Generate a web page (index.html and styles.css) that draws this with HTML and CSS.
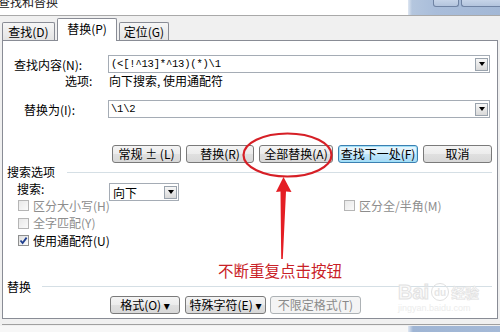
FILE: index.html
```html
<!DOCTYPE html>
<html lang="zh-CN">
<head>
<meta charset="utf-8">
<title>查找和替换</title>
<link rel="stylesheet" href="styles.css">
</head>
<body>
<div class="window">
  <div class="titlebar">
    <div class="title-left"><span class="title-text">查找和替换</span></div>
    <div class="title-right">
      <span class="wbtn wbtn-a"></span>
      <span class="wbtn wbtn-b"></span>
    </div>
  </div>
  <div class="dialog">
    <div class="tabs">
      <div class="tab">查找(D)</div>
      <div class="tab active">替换(P)</div>
      <div class="tab">定位(G)</div>
    </div>
    <div class="panel">
      <div class="row row-find">
        <label class="lbl lbl-find">查找内容(N):</label>
        <div class="combo"><span class="combo-text mono">(&lt;[!^13]*^13)(*)\1</span><span class="drop"><i class="tri"></i></span></div>
      </div>
      <div class="row row-opts">
        <span class="lbl lbl-opts">选项:</span>
        <span class="opts-val">向下搜索, 使用通配符</span>
      </div>
      <div class="row row-repl">
        <label class="lbl lbl-repl">替换为(I):</label>
        <div class="combo"><span class="combo-text mono">\1\2</span><span class="drop"><i class="tri"></i></span></div>
      </div>
      <div class="row btn-row">
        <button class="btn w-normal">常规 ± (L)</button>
        <button class="btn w-repl">替换(R)</button>
        <button class="btn w-all">全部替换(A)</button>
        <button class="btn btn-default w-next">查找下一处(F)</button>
        <button class="btn w-cancel">取消</button>
      </div>
      <div class="group-head group-search"><span>搜索选项</span><i class="rule"></i></div>
      <div class="row row-dir">
        <span class="lbl lbl-dir">搜索:</span>
        <div class="select"><span class="select-text">向下</span><span class="drop"><i class="tri"></i></span></div>
      </div>
      <div class="opt-row">
        <span class="check disabled"><i class="box"></i>区分大小写(H)</span>
        <span class="check disabled"><i class="box"></i>区分全/半角(M)</span>
      </div>
      <div class="opt-row">
        <span class="check disabled"><i class="box"></i>全字匹配(Y)</span>
      </div>
      <div class="opt-row">
        <span class="check"><i class="box checked"><svg viewBox="0 0 9 9" width="9" height="9"><path d="M1.5 4.5 L3.6 7 L7.6 1.6" fill="none" stroke="#1f3f8f" stroke-width="1.8"/></svg></i>使用通配符(U)</span>
      </div>
      <div class="group-head group-repl"><span>替换</span><i class="rule"></i></div>
      <div class="row btn-row2">
        <button class="btn w-fmt">格式(O) ▾</button>
        <button class="btn w-spec">特殊字符(E) ▾</button>
        <button class="btn btn-disabled w-nofmt">不限定格式(T)</button>
      </div>
    </div>
    <div class="dialog-foot"></div>
  </div>
  <div class="bottom-strip"><div class="bs-left"></div><div class="bs-right"></div></div>

  <svg class="annot" viewBox="0 0 500 332" width="500" height="332">
    <ellipse cx="287.5" cy="155" rx="44" ry="21.5" fill="none" stroke="#d61f26" stroke-width="2.2"/>
    <polygon points="283.5,177 291.5,192 286,191.5 282.8,259 281.2,259 280.5,191.5 276,192" fill="#e41e24"/>
  </svg>
  <div class="annot-text">不断重复点击按钮</div>

  <div class="watermark">
    <div class="wm-main"><span class="wm-bai">Bai</span><span class="wm-du">du</span><span class="wm-jy">经验</span></div>
    <div class="wm-url">jingyan.baidu.com</div>
  </div>
</div>
</body>
</html>
```

FILE: styles.css
```css
* { box-sizing: border-box; }
html, body { margin: 0; padding: 0; }
body {
  width: 500px;
  height: 332px;
  overflow: hidden;
  background: #fff;
  font-family: "Noto Sans CJK SC", "DejaVu Sans", sans-serif;
  font-size: 12px;
  color: #000;
}
.window { position: relative; width: 500px; height: 332px; overflow: hidden; }

/* title bar */
.titlebar { display: flex; height: 15px; }
.title-left { flex: 1; background: #fff; position: relative; overflow: hidden; }
.title-text {
  display: block;
  margin-top: -6px;
  margin-left: -2px;
  font-size: 12px;
  line-height: 16px;
  color: #222;
}
.title-right {
  width: 92px;
  background: linear-gradient(90deg, #dfe7f2 0, #b4c6de 4px, #a9bdda 30%, #a3b8d6 100%);
  display: flex;
  align-items: flex-start;
  padding-left: 25px;
  gap: 2px;
}
.wbtn {
  height: 7px;
  border: 1px solid #6f83a3;
  border-top: none;
  border-radius: 0 0 3px 3px;
  background: linear-gradient(#c6d4e8, #b3c4dd);
}
.wbtn-a { width: 26px; }
.wbtn-b { width: 40px; border-radius: 0 0 0 3px; border-right: none; }

/* dialog */
.dialog {
  background: #f0f0f0;
  border-top: 1px solid #a9a9a9;
  height: 311px;
  padding: 0 0 0 2px;
}
.tabs {
  display: flex;
  align-items: flex-end;
  height: 24px;
  gap: 2px;
}
.tab {
  height: 18px;
  border: 1px solid #898c95;
  border-bottom: none;
  border-radius: 2px 2px 0 0;
  background: linear-gradient(#f6f6f6, #e4e4e4);
  padding: 0;
  text-align: center;
  white-space: nowrap;
  line-height: 17px;
  font-size: 12px;
  position: relative;
}
.tab:first-child { width: 53px; }
.tab.active {
  width: 60px;
  height: 23px;
  background: #fff;
  margin-bottom: -1px;
  z-index: 2;
  line-height: 20px;
}
.tab:last-child { width: 50px; }

.panel {
  width: 496px;
  height: 279px;
  background: #fff;
  border: 1px solid #898c95;
  padding: 0 0 0 2px;
  position: relative;
  z-index: 1;
}

.row { display: flex; align-items: center; }
.lbl { white-space: nowrap; }

.row-find { margin-top: 14px; height: 18px; }
.lbl-find { width: 103px; padding-left: 9px; }
.row-opts { height: 16px; }
.lbl-opts { width: 104px; padding-left: 60px; line-height: 16px; }
.opts-val { line-height: 16px; }
.row-repl { margin-top: 11px; height: 18px; }
.lbl-repl { width: 103px; padding-left: 19px; }

.combo {
  width: 382px;
  height: 18px;
  border: 1px solid #a5acb5;
  display: flex;
  align-items: center;
  justify-content: space-between;
  padding: 0 1px 0 2px;
  background: #fff;
}
.combo-text { line-height: 16px; }
.mono { font-family: "Liberation Mono", "DejaVu Sans Mono", monospace; font-size: 10.5px; letter-spacing: -0.2px; }
.drop {
  width: 13px;
  height: 13px;
  border: 1px solid #9aa3ad;
  background: linear-gradient(#f7f7f7, #d9d9d9);
  display: flex;
  align-items: center;
  justify-content: center;
}
.tri {
  width: 0; height: 0;
  border-left: 3.5px solid transparent;
  border-right: 3.5px solid transparent;
  border-top: 4px solid #000;
}

/* buttons */
.btn {
  font-family: inherit;
  font-size: 12px;
  height: 18px;
  padding: 0;
  border: 1px solid #7a7a7a;
  border-radius: 3px;
  background: linear-gradient(#f4f4f4 0%, #ececec 50%, #e0e0e0 51%, #d8d8d8 100%);
  color: #000;
  line-height: 16px;
  white-space: nowrap;
}
.btn-default {
  border-color: #3c7fb1;
  background: linear-gradient(#eaf6fd 0%, #d9f0fc 50%, #bee6fd 51%, #a7d9f5 100%);
  box-shadow: inset 0 0 0 1px #9fe0f7;
}
.btn-disabled {
  color: #8a8a8a;
  border-color: #adb2b5;
  background: #f4f4f4;
}
.btn-row { margin-top: 27px; padding-left: 107px; gap: 5px; height: 18px; }
.w-normal { width: 69px; }
.w-repl { width: 68px; }
.w-all { width: 74px; }
.w-next { width: 80px; }
.w-cancel { width: 69px; }

/* group headers */
.group-head { display: flex; align-items: center; height: 14px; padding-left: 2px; }
.group-head span { line-height: 14px; white-space: nowrap; }
.group-head .rule { display: block; height: 1px; background: #d5dfe5; width: 425px; }
.group-search { margin-top: 2px; }
.group-search .rule { margin-left: 12px; }
.group-repl { margin-top: 30px; }
.group-repl .rule { margin-left: 11px; width: 450px; }

.row-dir { height: 16px; margin-top: 2px; align-items: flex-start; }
.lbl-dir { width: 104px; padding-left: 12px; line-height: 16px; }
.select {
  margin-top: 2px;
  width: 70px;
  height: 18px;
  border: 1px solid #a5acb5;
  background: #fff;
  display: flex;
  align-items: center;
  justify-content: space-between;
  padding: 0 1px 0 3px;
  position: relative;
  z-index: 2;
}

.opt-row {
  display: grid;
  grid-template-columns: 326px auto;
  height: 17.5px;
  padding-left: 13px;
  align-items: center;
}
.check { display: flex; align-items: center; white-space: nowrap; line-height: 16px; }
.check.disabled { color: #8d8d8d; }
.box {
  width: 11px;
  height: 11px;
  border: 1px solid #b5b5b5;
  background: linear-gradient(135deg, #e8e8e8, #fafafa);
  margin-right: 4px;
  display: flex;
  align-items: center;
  justify-content: center;
}
.box.checked { border-color: #8e8f8f; background: linear-gradient(135deg, #dedede, #fdfdfd); }

.btn-row2 { margin-top: 2px; padding-left: 105px; gap: 5px; height: 18px; }
.w-fmt { width: 70px; }
.w-spec { width: 81px; }
.w-nofmt { width: 91px; }
.btn-row2 .btn-disabled { margin-left: -1px; }

.dialog-foot { height: 6px; border-bottom: 1px solid #a0a0a0; }

.bottom-strip { display: flex; height: 6px; }
.bs-left { flex: 1; background: #f7f7f7; }
.bs-right { width: 92px; background: linear-gradient(90deg, #dfe7f2 0, #9fb5d4 5px, #a4b9d7 100%); }

/* annotations */
.annot { position: absolute; left: 0; top: 0; pointer-events: none; z-index: 5; }
.annot-text {
  position: absolute;
  left: 218px;
  top: 260px;
  font-size: 15.5px;
  line-height: 20px;
  color: #c92127;
  z-index: 5;
  white-space: nowrap;
}

.watermark {
  position: absolute;
  left: 398px;
  top: 282px;
  z-index: 4;
  color: #f0f0f0;
  pointer-events: none;
}
.wm-main { display: flex; align-items: center; gap: 2px; }
.wm-bai {
  font-family: "Liberation Sans", sans-serif;
  font-weight: bold;
  font-size: 20px;
  line-height: 20px;
  color: #fafafa;
  -webkit-text-stroke: 1px #e2e2e2;
}
.wm-du {
  width: 18px; height: 18px;
  border: 1px solid #e0e0e0;
  border-radius: 50%;
  font-family: "Liberation Sans", sans-serif;
  font-size: 10px;
  font-weight: bold;
  color: #e6e6e6;
  display: flex; align-items: center; justify-content: center;
}
.wm-jy { font-size: 14px; font-weight: bold; color: #fafafa; -webkit-text-stroke: 0.6px #e0e0e0; }
.wm-url { font-family: "Liberation Sans", sans-serif; font-size: 9px; color: #ececec; margin-top: 1px; }
```
